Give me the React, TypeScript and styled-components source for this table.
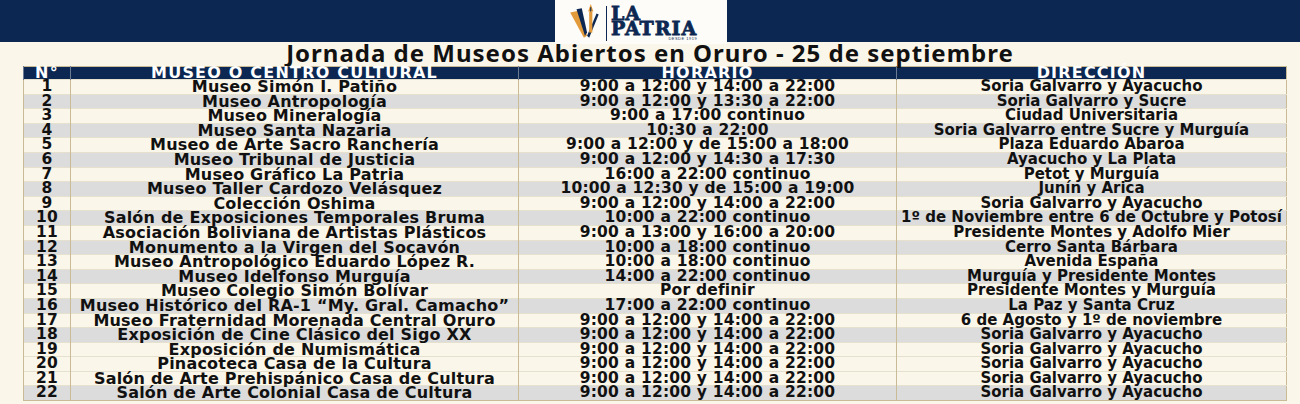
import React from 'react';
import styled, { createGlobalStyle } from 'styled-components';

const GlobalStyle = createGlobalStyle`
    html, body {
        margin: 0;
        padding: 0;
        background: #fbf6ea;
    }
    body {
        font-family: "DejaVu Sans", "Noto Sans", sans-serif;
        width: 1300px;
        height: 404px;
        overflow: hidden;
    }
`;

const TopBand = styled.header`
    height: 42px;
    background: #0c2852;
    display: flex;
    justify-content: center;
    padding-right: 18px;
`;

const LogoBox = styled.div`
    width: 172px;
    height: 44px;
    background: #fdfcf8;
    display: flex;
    align-items: center;
    padding-left: 14px;
    box-sizing: border-box;
    gap: 3px;
`;

const LogoWords = styled.div`
    border-left: 1.5px solid #0c2852;
    padding-left: 4px;
    display: flex;
    flex-direction: column;
    font-family: "DejaVu Serif", serif;
    font-weight: 700;
    color: #0c2852;
    -webkit-text-stroke: 0.8px #0c2852;
    line-height: 15px;
    font-size: 19px;
    letter-spacing: 1px;
    margin-top: 3px;
`;

const Since = styled.span`
    font-family: "Liberation Sans", sans-serif;
    font-size: 4px;
    line-height: 5px;
    letter-spacing: 0.5px;
    align-self: flex-end;
    font-weight: 400;
    -webkit-text-stroke: 0;
`;

const Title = styled.h1`
    margin: 0;
    height: 24px;
    font-family: "Noto Sans", sans-serif;
    font-size: 24px;
    line-height: 22px;
    font-weight: 700;
    text-align: center;
    color: #111;
    letter-spacing: 1px;
    white-space: nowrap;
`;

const Table = styled.table`
    margin-left: 23px;
    width: 1259px;
    table-layout: fixed;
    border-collapse: collapse;
    border: 1px solid #c8bb96;
`;

const HeadCell = styled.th<{ w: number }>`
    width: ${p => p.w}px;
    height: 12px;
    padding: 0;
    background: #0c2852;
    color: #fff;
    font-size: 16px;
    line-height: 12px;
    font-weight: 700;
    letter-spacing: 1.2px;
    border-left: 1px solid #6c7a92;
    white-space: nowrap;
`;

const Row = styled.tr<{ shade: boolean }>`
    background: ${p => (p.shade ? '#dcdcdc' : '#fbf6ea')};
    border-top: 1px solid #e6e0cf;
`;

const Cell = styled.td<{ size: number; track?: number }>`
    height: 13.6px;
    padding: 0;
    text-align: center;
    font-size: ${p => p.size}px;
    line-height: 13.6px;
    font-weight: 700;
    letter-spacing: ${p => p.track ?? 0.2}px;
    color: #111;
    white-space: nowrap;
    border-left: 1px solid #c8bb96;
`;

type TMuseum = [string, string, string];

const museums: TMuseum[] = [
    ['Museo Simón I. Patiño', '9:00 a 12:00 y 14:00 a 22:00', 'Soria Galvarro y Ayacucho'],
    ['Museo Antropología', '9:00 a 12:00 y 13:30 a 22:00', 'Soria Galvarro y Sucre'],
    ['Museo Mineralogía', '9:00 a 17:00 continuo', 'Ciudad Universitaria'],
    ['Museo Santa Nazaria', '10:30 a 22:00', 'Soria Galvarro entre Sucre y Murguía'],
    ['Museo de Arte Sacro Ranchería', '9:00 a 12:00 y de 15:00 a 18:00', 'Plaza Eduardo Abaroa'],
    ['Museo Tribunal de Justicia', '9:00 a 12:00 y 14:30 a 17:30', 'Ayacucho y La Plata'],
    ['Museo Gráfico La Patria', '16:00 a 22:00 continuo', 'Petot y Murguía'],
    ['Museo Taller Cardozo Velásquez', '10:00 a 12:30 y de 15:00 a 19:00', 'Junín y Arica'],
    ['Colección Oshima', '9:00 a 12:00 y 14:00 a 22:00', 'Soria Galvarro y Ayacucho'],
    ['Salón de Exposiciones Temporales Bruma', '10:00 a 22:00 continuo', '1º de Noviembre entre 6 de Octubre y Potosí'],
    ['Asociación Boliviana de Artistas Plásticos', '9:00 a 13:00 y 16:00 a 20:00', 'Presidente Montes y Adolfo Mier'],
    ['Monumento a la Virgen del Socavón', '10:00 a 18:00 continuo', 'Cerro Santa Bárbara'],
    ['Museo Antropológico Eduardo López R.', '10:00 a 18:00 continuo', 'Avenida España'],
    ['Museo Idelfonso Murguía', '14:00 a 22:00 continuo', 'Murguía y Presidente Montes'],
    ['Museo Colegio Simón Bolívar', 'Por definir', 'Presidente Montes y Murguía'],
    ['Museo Histórico del RA-1 “My. Gral. Camacho”', '17:00 a 22:00 continuo', 'La Paz y Santa Cruz'],
    ['Museo Fraternidad Morenada Central Oruro', '9:00 a 12:00 y 14:00 a 22:00', '6 de Agosto y 1º de noviembre'],
    ['Exposición de Cine Clásico del Sigo XX', '9:00 a 12:00 y 14:00 a 22:00', 'Soria Galvarro y Ayacucho'],
    ['Exposición de Numismática', '9:00 a 12:00 y 14:00 a 22:00', 'Soria Galvarro y Ayacucho'],
    ['Pinacoteca Casa de la Cultura', '9:00 a 12:00 y 14:00 a 22:00', 'Soria Galvarro y Ayacucho'],
    ['Salón de Arte Prehispánico Casa de Cultura', '9:00 a 12:00 y 14:00 a 22:00', 'Soria Galvarro y Ayacucho'],
    ['Salón de Arte Colonial Casa de Cultura', '9:00 a 12:00 y 14:00 a 22:00', 'Soria Galvarro y Ayacucho'],
];

const LogoMark = () => (
    <svg width="34" height="38" viewBox="0 0 32 36">
        <path d="M1 9 L10 7 L17 31 L14 33 Z" fill="#e39a3b" />
        <path d="M7 6 L12 5 L17 28 L15 31 Z" fill="#0c2852" />
        <path d="M17 31 L26 10 L28 11 L19 33 Z" fill="#0c2852" />
        <rect x="19" y="8" width="3" height="20" fill="#e39a3b" />
        <path d="M18 8 L20.5 1 L23 8 Z" fill="#e39a3b" />
        <rect x="20" y="4" width="1" height="4" fill="#0c2852" />
    </svg>
);

const App = () => (
    <>
        <GlobalStyle />
        <TopBand>
            <LogoBox>
                <LogoMark />
                <LogoWords>
                    <span>LA</span>
                    <span>PATRIA</span>
                    <Since>DESDE 1919</Since>
                </LogoWords>
            </LogoBox>
        </TopBand>
        <Title>Jornada de Museos Abiertos en Oruro - 25 de septiembre</Title>
        <Table>
            <thead>
                <tr>
                    <HeadCell w={46}>N°</HeadCell>
                    <HeadCell w={447}>MUSEO O CENTRO CULTURAL</HeadCell>
                    <HeadCell w={377}>HORARIO</HeadCell>
                    <HeadCell w={389}>DIRECCIÓN</HeadCell>
                </tr>
            </thead>
            <tbody>
                {museums.map(([name, hours, address], i) => (
                    <Row key={name} shade={(i + 1) % 2 === 0 && i !== 19}>
                        <Cell size={15.5}>{i + 1}</Cell>
                        <Cell size={16}>{name}</Cell>
                        <Cell size={15.5}>{hours}</Cell>
                        <Cell size={15} track={0}>{address}</Cell>
                    </Row>
                ))}
            </tbody>
        </Table>
    </>
);

export default App;
